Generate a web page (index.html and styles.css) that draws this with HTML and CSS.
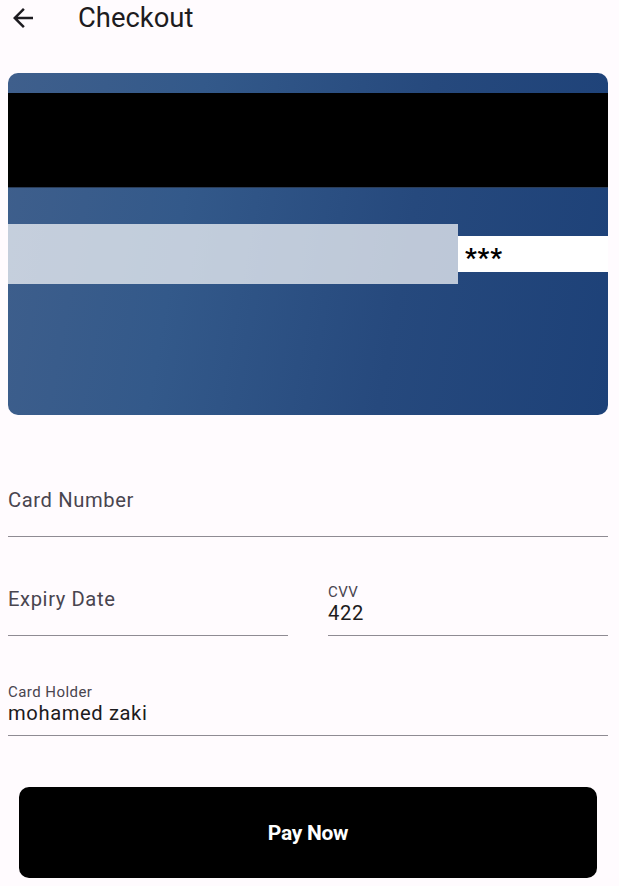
FILE: index.html
```html
<!DOCTYPE html>
<html>
<head>
<meta charset="utf-8">
<link rel="stylesheet" href="styles.css">
</head>
<body>
<header class="appbar">
  <svg class="back" viewBox="0 0 24 24" width="30" height="30"><path d="M20 11H7.83l5.59-5.59L12 4l-8 8 8 8 1.41-1.41L7.83 13H20v-2z" fill="#1d1b20"/></svg>
  <h1 class="title">Checkout</h1>
</header>
<main class="content">
  <section class="card">
    <div class="mag"></div>
    <div class="sig-row">
      <div class="sig"></div>
      <div class="cvv-box">***</div>
    </div>
  </section>
  <div class="field first empty"><span class="ph">Card Number</span></div>
  <div class="row">
    <div class="field empty"><span class="ph">Expiry Date</span></div>
    <div class="field filled"><span class="lbl">CVV</span><span class="val">422</span></div>
  </div>
  <div class="field filled last"><span class="lbl">Card Holder</span><span class="val">mohamed zaki</span></div>
  <button class="pay">Pay Now</button>
</main>
</body>
</html>
```

FILE: styles.css
```css
html, body { margin: 0; padding: 0; }
body {
  background: #fffbfe;
  font-family: Roboto, "Noto Sans", sans-serif;
  color: #1d1b20;
  width: 619px;
  height: 886px;
  overflow: hidden;
}
.appbar {
  height: 36px;
  display: flex;
  align-items: center;
  padding-left: 8px;
}
.back { display: block; }
.title {
  margin: 0 0 0 40px;
  font-size: 27.4px;
  font-weight: 400;
  line-height: 32px;
  color: #1d1b20;
}
.content {
  padding: 0 11px 0 8px;
  display: flex;
  flex-direction: column;
}
.card {
  margin-top: 37px;
  height: 342px;
  border-radius: 10px;
  background: linear-gradient(100deg, #3f5f8c 0%, #33598a 30%, #26497d 65%, #1d4178 100%);
  padding-top: 20px;
  box-sizing: border-box;
  overflow: hidden;
}
.mag {
  height: 94px;
  background: #000;
  border-bottom: 1px solid #2b3d58;
}
.sig-row {
  margin-top: 36px;
  display: flex;
  align-items: center;
}
.sig {
  width: 450px;
  height: 60px;
  background: rgba(255,255,255,0.7);
}
.cvv-box {
  flex: 1;
  height: 36px;
  background: #fff;
  color: #000;
  font-weight: 700;
  font-size: 26px;
  line-height: 45px;
  padding-left: 7px;
  letter-spacing: 0.8px;
}
.field {
  height: 60px;
  border-bottom: 1px solid #8f8b93;
  display: flex;
  flex-direction: column;
  justify-content: flex-end;
  box-sizing: border-box;
  margin-top: 39px;
}
.field.first { margin-top: 62px; }
.field.last { margin-top: 40px; }
.field.empty { padding-bottom: 24px; }
.field.filled { padding-bottom: 10px; }
.ph {
  font-size: 20.2px;
  line-height: 24px;
  letter-spacing: 0.6px;
  color: #49454f;
}
.lbl {
  font-size: 15px;
  line-height: 16px;
  letter-spacing: 0.45px;
  color: #49454f;
  margin-bottom: 1px;
}
.val {
  font-size: 20.2px;
  line-height: 24px;
  letter-spacing: 0.6px;
  color: #1d1b20;
}
.row {
  display: grid;
  grid-template-columns: 1fr 1fr;
  column-gap: 40px;
}
.pay {
  margin: 51px 11px 0 11px;
  height: 91px;
  border: none;
  border-radius: 10px;
  background: #000;
  color: #fff;
  font-family: Roboto, sans-serif;
  font-weight: 700;
  font-size: 21px;
  letter-spacing: -0.3px;
  cursor: pointer;
}
```
